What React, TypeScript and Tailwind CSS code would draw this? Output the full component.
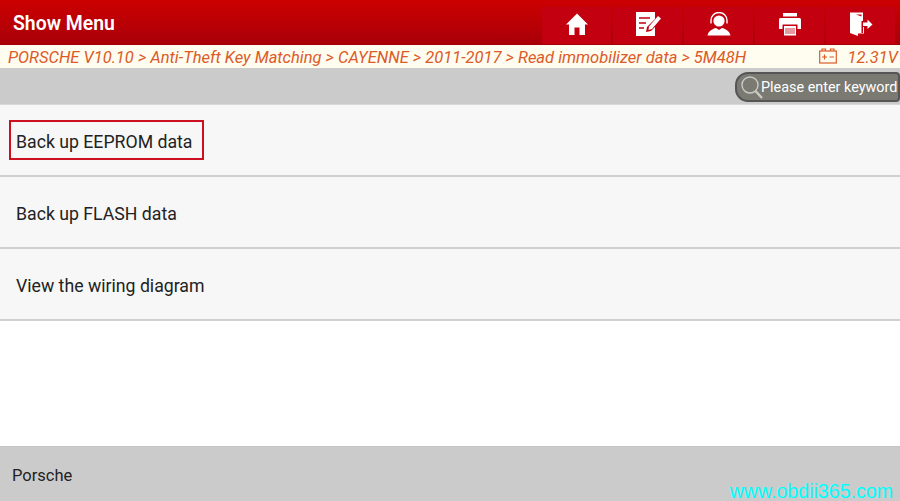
const font = { fontFamily: 'Roboto, sans-serif' };

function HomeIcon() {
    return (
        <svg width="24" height="24" viewBox="0 0 24 24" fill="#fff">
            <path d="M12 1.5 L23 12.5 L20 12.5 L20 23 L14.5 23 L14.5 15.5 L9.5 15.5 L9.5 23 L4 23 L4 12.5 L1 12.5 Z" />
        </svg>
    );
}

function EditIcon() {
    return (
        <svg width="28" height="26" viewBox="0 0 28 26">
            <path d="M2 1 H21 V8 L13 16 L12 21 L17 20 L21 16 V25 H2 Z" fill="#fff" />
            <path d="M5 7 H16 M5 12 H12 M5 17 H10" stroke="#c00010" strokeWidth="1.6" />
            <path d="M15 15.5 L24 5 L27 7.5 L18 18 L14.5 19 Z" fill="#fff" />
        </svg>
    );
}

function AgentIcon() {
    return (
        <svg width="24" height="24" viewBox="0 0 24 24" fill="none">
            <circle cx="12" cy="9" r="5.6" fill="#fff" />
            <path d="M4 11.5 V8.5 A8 8 0 0 1 20 8.5 V11.5" stroke="#fff" strokeWidth="1.4" />
            <path d="M.5 23.5 C1.5 18.5 6 16.8 9 16 L12 18 L15 16 C18 16.8 22.5 18.5 23.5 23.5 Z" fill="#fff" />
        </svg>
    );
}

function PrintIcon() {
    return (
        <svg width="24" height="24" viewBox="0 0 24 24" fill="#fff">
            <path d="M5 1 H19 V4.5 H5 Z" />
            <path d="M2.5 6 H21.5 Q23 6 23 7.5 V17 H19.5 V12.5 H4.5 V17 H1 V7.5 Q1 6 2.5 6 Z" />
            <path d="M6 14 H18 V23.5 H6 Z" />
            <path d="M7 17 H17 M7 19 H17 M7 21 H17" stroke="#c00010" strokeWidth="0.8" />
        </svg>
    );
}

function ExitIcon() {
    return (
        <svg width="24" height="24" viewBox="0 0 24 24" fill="#fff">
            <path d="M1 .5 H14 V9 H12.5 V2.5 L7 2.5 L12.5 4.5 V21 L14 21 V15 H15 V21.5 H9 V24 L1 21 Z" />
            <path d="M14 10.5 H18.5 V7.5 L23.5 12.5 L18.5 17 V14 H14 Z" />
        </svg>
    );
}

function BatteryIcon() {
    return (
        <svg width="18" height="16" viewBox="0 0 18 16" fill="none" stroke="#dc5a28" strokeWidth="1.2" className="mb-[1px]">
            <rect x=".7" y="3" width="16.6" height="12" />
            <path d="M3 3 V1 H6.5 V3 M11.5 3 V1 H15 V3" />
            <path d="M3 9 H8 M5.5 6.5 V11.5 M10.5 9 H15" />
        </svg>
    );
}

function SearchGlyph() {
    return (
        <svg width="24" height="25" viewBox="0 0 24 25" fill="none" stroke="#c9c9c6">
            <circle cx="10" cy="10" r="8" strokeWidth="1.4" />
            <path d="M15.5 16 L22 23" strokeWidth="2.4" />
        </svg>
    );
}

function TopButton({ children }: { children: React.ReactNode }) {
    return (
        <div className="flex h-[37px] w-[69px] items-center justify-center bg-[#c20010] pb-[4px]">
            {children}
        </div>
    );
}

function Row({ label, boxed }: { label: string; boxed?: boolean }) {
    return (
        <div className="flex h-[72px] items-center border-b-2 border-[#d0d0d0] bg-[#f7f7f7] pl-[16px] pt-[4px] text-[17.7px] text-[#222]">
            {boxed ? (
                <span className="-ml-[7px] mb-[4px] flex h-[40px] w-[195px] items-center border-[2px] border-[#cc1020] pl-[5px] pt-[4px]">{label}</span>
            ) : (
                label
            )}
        </div>
    );
}

export default function App() {
    return (
        <div className="flex h-[501px] w-[900px] flex-col overflow-hidden bg-white" style={font}>
            {/* header */}
            <div className="flex h-[45px] items-end justify-between bg-gradient-to-b from-[#cc0000] to-[#a80008] pl-[13px] pr-[5px]">
                <span className="self-center pt-[2px] text-[19.4px] font-semibold text-white">Show Menu</span>
                <div className="mb-[1px] flex gap-[2px]">
                    <TopButton><HomeIcon /></TopButton>
                    <TopButton><EditIcon /></TopButton>
                    <TopButton><AgentIcon /></TopButton>
                    <TopButton><PrintIcon /></TopButton>
                    <TopButton><ExitIcon /></TopButton>
                </div>
            </div>

            {/* breadcrumb */}
            <div className="flex h-[23px] items-center justify-between bg-[#fffdf0] pl-[8px] pr-[2px] text-[16.5px] italic text-[#dc5a28]">
                <span className="pt-[3px]">PORSCHE V10.10 &gt; Anti-Theft Key Matching &gt; CAYENNE &gt; 2011-2017 &gt; Read immobilizer data &gt; 5M48H</span>
                <div className="flex items-center gap-[11px]">
                    <BatteryIcon />
                    <span className="pt-[3px]">12.31V</span>
                </div>
            </div>

            {/* search bar */}
            <div className="flex h-[37px] items-center justify-end bg-[#cbcbcb] border-b border-[#d8d8d8] pt-[2px]">
                <div className="flex h-[30px] w-[165px] items-center rounded-l-[13px] rounded-r-[4px] border-2 border-[#555] bg-[#7a7a72] pl-[3px] text-[14.4px] text-white whitespace-nowrap overflow-hidden">
                    <SearchGlyph />
                    <span className="-ml-[3px] pt-[1px]">Please enter keyword</span>
                </div>
            </div>

            <Row label="Back up EEPROM data" boxed />
            <Row label="Back up FLASH data" />
            <Row label="View the wiring diagram" />

            <div className="flex-1 bg-white" />

            {/* footer */}
            <div className="relative flex h-[55px] items-center border-t border-[#c4c4c4] bg-[#cbcbcb] pl-[12px] pt-[5px] text-[16.5px] text-[#222]">
                Porsche
                <span
                    className="absolute -bottom-[1px] right-[7px] text-[19.6px] leading-none text-[#00ffff]"
                    style={{ fontFamily: '"Liberation Sans", sans-serif' }}
                >
                    www.obdii365.com
                </span>
            </div>
        </div>
    );
}
